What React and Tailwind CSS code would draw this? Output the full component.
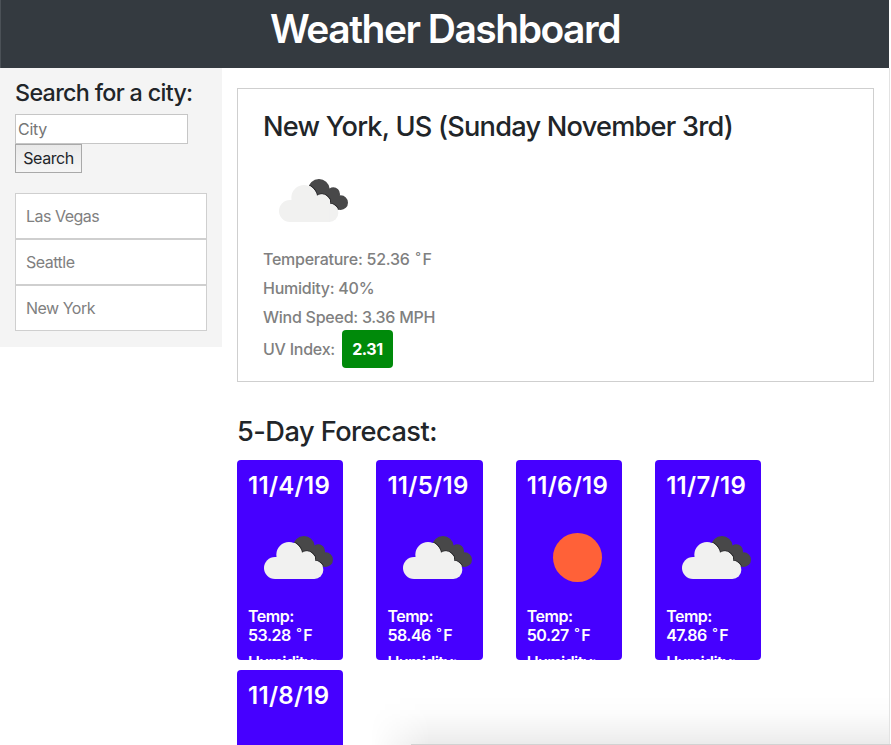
import React from "react";

function CloudShape() {
  return (
    <>
      <circle cx="120" cy="153" r="33" />
      <circle cx="162" cy="113" r="38" />
      <circle cx="215" cy="128" r="24" />
      <circle cx="238" cy="159" r="27" />
      <rect x="120" y="120" width="118" height="66" />
    </>
  );
}

function BrokenClouds({ id }) {
  return (
    <svg className="block size-[100px] shrink-0" viewBox="0 0 100 100">
      <defs>
        <clipPath id={id}>
          <circle cx="207" cy="89" r="32" />
          <circle cx="250" cy="102" r="20" />
          <circle cx="272" cy="128" r="22" />
          <path d="M200 70 L245 90 L270 120 L262 148 L225 135 L190 100Z" />
        </clipPath>
      </defs>
      <g transform="translate(-13 9) scale(.33333)">
        <g clipPath={`url(#${id})`}>
          <rect x="170" y="50" width="130" height="110" fill="#484849" />
          <g fill="#2c2c2e" stroke="#2c2c2e" strokeWidth="8"><CloudShape /></g>
          <g fill="#f8f8f8" stroke="#f8f8f8" strokeWidth="3"><CloudShape /></g>
        </g>
        <g fill="#f1f1f0"><CloudShape /></g>
      </g>
    </svg>
  );
}

function ClearSky() {
  return (
    <svg className="block size-[100px] shrink-0" viewBox="0 0 100 100">
      <circle cx="50.5" cy="49.5" r="24.5" fill="#ff6138" />
    </svg>
  );
}

function Degree() {
  return <span className="ml-[2px] mr-[2px]">˚</span>;
}

const cities = ["Las Vegas", "Seattle", "New York"];
const days = [
  { date: "11/4/19", temp: "53.28", icon: "cloud" },
  { date: "11/5/19", temp: "58.46", icon: "cloud" },
  { date: "11/6/19", temp: "50.27", icon: "sun" },
  { date: "11/7/19", temp: "47.86", icon: "cloud" },
  { date: "11/8/19", icon: "cloud" },
];

function DayCard({ day }) {
  return (
    <article className="h-[200px] w-[106.2px] overflow-hidden rounded bg-[#4600ff] pl-[11px] pt-[11px] text-white">
      <h3 className="whitespace-nowrap text-[24px] font-semibold leading-[29px] tracking-[0.3px]">{day.date}</h3>
      <div className="mt-[8px]">
        {day.icon === "sun" ? <ClearSky /> : <BrokenClouds id={`cloud-${day.date.replaceAll("/", "-")}`} />}
      </div>
      {day.temp && (
        <>
          <p className="-mt-[1px] text-[16px] font-semibold leading-[19px] tracking-[-0.5px]">
            Temp:<br />{day.temp} <Degree />F
          </p>
          <p className="mt-[8px] text-[16px] font-semibold leading-[19px] tracking-[-0.6px]">Humidity:</p>
        </>
      )}
    </article>
  );
}

export default function App() {
  return (
    <div className="relative flex h-[745px] w-[891px] flex-col overflow-hidden bg-white font-['Inter',sans-serif] text-[#212529]">
      <header className="mr-[2px] h-[68px] shrink-0 border-l border-[#4b5157] bg-[#343a40] pt-[5px] text-center text-white">
        <h1 className="text-[39px] font-semibold leading-[48px] tracking-[-1.5px]">Weather Dashboard</h1>
      </header>
      <div className="mr-[1px] flex flex-1 border-r border-[#e3e3e3]">
        <aside className="h-[279px] w-[222px] shrink-0 bg-[#f4f4f4] px-[15px] pt-[10px]">
          <h2 className="whitespace-nowrap text-[23.3px] font-medium leading-[29px] tracking-[-0.67px]">Search for a city:</h2>
          <input placeholder="City" className="mt-[7px] block h-[30px] w-[173px] border border-[#c6c6c6] bg-white px-[2px] text-[16px] tracking-[-0.3px] placeholder:text-[#757575]" />
          <button className="block h-[29px] w-[67px] border border-[#a9a9a9] bg-gradient-to-b from-[#e9e9e9] to-[#f5f5f5] pb-px text-[16px] leading-[26px] tracking-[-0.45px]">Search</button>
          <ul className="mt-[20px]">
            {cities.map((c) => (
              <li key={c} className="h-[46px] border border-[#cfcfcf] bg-white pl-[10px] text-[16px] leading-[44px] tracking-[-0.5px] text-[#808080]">{c}</li>
            ))}
          </ul>
        </aside>
        <main className="w-[667px] px-[15px] pt-[20px]">
          <section className="h-[294px] w-[637px] border border-[#cfcfcf] pl-[25px] pt-[21px]">
            <h2 className="whitespace-nowrap text-[27.2px] font-medium leading-[34px] tracking-[-0.78px]">New York, US (Sunday November 3rd)</h2>
            <div className="mt-[6.5px]"><BrokenClouds id="current-cloud" /></div>
            <div className="-mt-[6px] text-[16px] font-medium leading-[29px] tracking-[-0.25px] text-[#808080]">
              <p>Temperature: 52.36 <Degree />F</p>
              <p>Humidity: 40%</p>
              <p>Wind Speed: 3.36 MPH</p>
              <p className="-mt-[2px] flex h-[38px] items-center">
                <span className="pt-[2px]">UV Index:</span>
                <span className="ml-[7px] flex h-[38px] w-[51px] items-center justify-center rounded bg-[#008a0a] pt-[2px] font-bold tracking-[-0.5px] text-white">2.31</span>
              </p>
            </div>
          </section>
          <h2 className="mt-[33px] text-[27.2px] font-medium leading-[34px] tracking-[-0.53px]">5-Day Forecast:</h2>
          <div className="mt-[11px] flex flex-wrap gap-x-[33.2px] gap-y-[10px]">
            {days.map((d) => <DayCard key={d.date} day={d} />)}
          </div>
        </main>
      </div>
      <div className="pointer-events-none absolute bottom-0 left-[370px] right-[2px] h-[50px] bg-[linear-gradient(to_bottom,transparent,rgba(0,0,0,0.012)_35%,rgba(0,0,0,0.04)_65%,rgba(0,0,0,0.08))] [mask-image:linear-gradient(to_right,transparent,black_60px)]" />
      <div className="pointer-events-none absolute bottom-0 left-[411px] right-0 h-px bg-[#d2d2d2]" />
    </div>
  );
}
